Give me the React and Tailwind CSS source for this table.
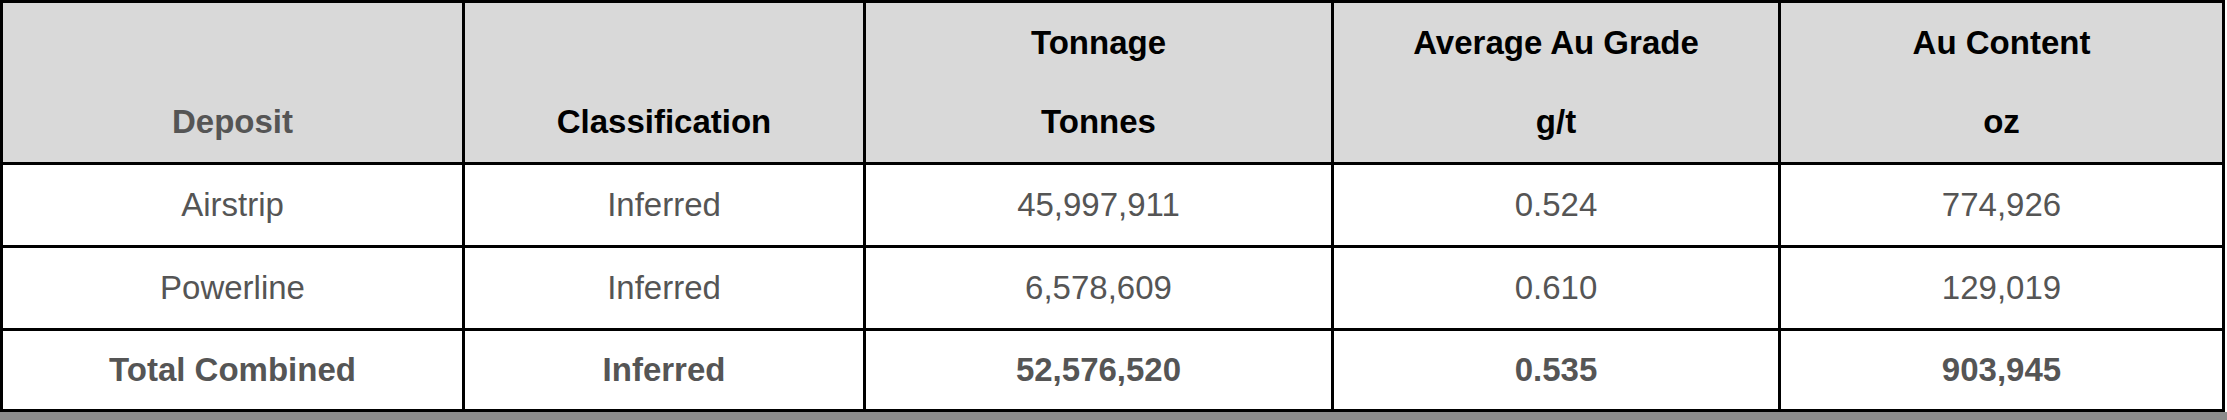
import React from 'react'

const rows = [
  { deposit: 'Airstrip', cls: 'Inferred', tonnes: '45,997,911', grade: '0.524', oz: '774,926' },
  { deposit: 'Powerline', cls: 'Inferred', tonnes: '6,578,609', grade: '0.610', oz: '129,019' },
  { deposit: 'Total Combined', cls: 'Inferred', tonnes: '52,576,520', grade: '0.535', oz: '903,945', total: true },
]

const headers = [
  { top: '', bottom: 'Deposit', muted: true },
  { top: '', bottom: 'Classification' },
  { top: 'Tonnage', bottom: 'Tonnes' },
  { top: 'Average Au Grade', bottom: 'g/t' },
  { top: 'Au Content', bottom: 'oz' },
]

const HeaderCell = ({ h }) => (
  <th className={`border-[3px] border-black bg-[#d9d9d9] align-middle text-center font-bold ${h.muted ? 'text-[#555555]' : 'text-black'}`}>
    <div className="leading-[38px]">{h.top || '\u00a0'}</div>
    <div className="mt-[41px] leading-[38px]">{h.bottom}</div>
  </th>
)

export default function App() {
  return (
    <div className="w-[2227px] h-[420px] bg-white font-['Liberation_Sans',Arial,sans-serif] text-[33px]">
      <table className="table-fixed border-collapse w-[2225px]">
        <colgroup>
          <col className="w-[462px]" />
          <col className="w-[401px]" />
          <col className="w-[468px]" />
          <col className="w-[447px]" />
          <col className="w-[444px]" />
        </colgroup>
        <thead>
          <tr className="h-[162px]">
            {headers.map((h, i) => (
              <HeaderCell key={i} h={h} />
            ))}
          </tr>
        </thead>
        <tbody>
          {rows.map((r, i) => (
            <tr key={i} className={i === 2 ? 'h-[81px]' : 'h-[83px]'}>
              {[r.deposit, r.cls, r.tonnes, r.grade, r.oz].map((v, j) => (
                <td
                  key={j}
                  className={`border-[3px] border-black text-center align-middle text-[#555555] leading-[38px] ${r.total ? 'font-bold' : ''}`}
                >
                  {v}
                </td>
              ))}
            </tr>
          ))}
        </tbody>
      </table>
      <div className="h-[10px] bg-[#8c8c8c]" />
    </div>
  )
}
